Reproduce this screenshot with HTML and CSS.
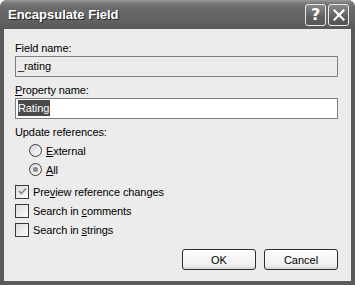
FILE: index.html
```html
<!DOCTYPE html>
<html lang="en">
<head>
    <meta charset="UTF-8">
    <title>Encapsulate Field</title>
    <link rel="stylesheet" href="styles.css">
</head>
<body>
    <div class="window">
        <div class="titlebar">
            <span class="title">Encapsulate Field</span>
            <div class="caption-buttons">
                <div class="cap-btn">?</div>
                <div class="cap-btn">
                    <svg width="12" height="12" viewBox="0 0 12 12">
                        <path d="M1.5 1.5 L10.5 10.5 M10.5 1.5 L1.5 10.5" stroke="#fff" stroke-width="2.2" stroke-linecap="square"/>
                    </svg>
                </div>
            </div>
        </div>

        <div class="client">
            <div class="label">Field name:</div>
            <div class="textbox readonly">_rating</div>

            <div class="label gap"><u>P</u>roperty name:</div>
            <div class="textbox"><span class="selected">Rating</span></div>

            <div class="label gap">Update references:</div>
            <div class="options indent">
                <div class="row">
                    <span class="radio"></span>
                    <span><u>E</u>xternal</span>
                </div>
                <div class="row">
                    <span class="radio checked"><span class="dot"></span></span>
                    <span><u>A</u>ll</span>
                </div>
            </div>

            <div class="options checks">
                <div class="row">
                    <span class="checkbox">
                        <svg width="11" height="11" viewBox="0 0 11 11">
                            <path d="M2 5 L4.3 7.5 L9 2.5" fill="none" stroke="#8a8a8a" stroke-width="1.8"/>
                        </svg>
                    </span>
                    <span>Pre<u>v</u>iew reference changes</span>
                </div>
                <div class="row">
                    <span class="checkbox"></span>
                    <span>Search in <u>c</u>omments</span>
                </div>
                <div class="row">
                    <span class="checkbox"></span>
                    <span>Search in <u>s</u>trings</span>
                </div>
            </div>

            <div class="buttons">
                <button class="btn">OK</button>
                <button class="btn">Cancel</button>
            </div>
        </div>
    </div>
</body>
</html>
```

FILE: styles.css
```css
body {
    margin: 0;
    background-color: #fff;
    font-family: "Liberation Sans", Arial, sans-serif;
    font-size: 11px;
    letter-spacing: -0.1px;
    color: #000;
}

.window {
    width: 355px;
    height: 285px;
    display: flex;
    flex-direction: column;
    border-radius: 7px 7px 0 0;
    overflow: hidden;
    background-color: #5a5a5a;
}

.titlebar {
    height: 29px;
    display: flex;
    align-items: center;
    justify-content: space-between;
    padding: 0 6px 0 8px;
    background: linear-gradient(to bottom, #9a9a9a 0px, #7a7a7a 3px, #6a6a6a 8px, #626262 20px, #585858 29px);
}

.title {
    color: #fff;
    font-family: "Liberation Sans", Arial, sans-serif;
    font-weight: bold;
    font-size: 13px;
    letter-spacing: 0;
    text-shadow: 1px 1px 0 #222;
}

.caption-buttons {
    display: flex;
    gap: 2px;
}

.cap-btn {
    width: 19px;
    height: 20px;
    border: 1px solid #e8e8e8;
    border-radius: 3px;
    background: linear-gradient(to bottom, #8a8a8a, #5e5e5e 60%, #555);
    display: flex;
    align-items: center;
    justify-content: center;
    color: #fff;
    font-family: "DejaVu Sans", sans-serif;
    font-weight: bold;
    font-size: 16px;
}

.client {
    flex: 1;
    margin: 0 4px 4px 4px;
    background-color: #ececec;
    padding: 12px 13px 0 11px;
    display: flex;
    flex-direction: column;
}

.label {
    line-height: 14px;
    margin-bottom: 1px;
}

.label.gap {
    margin-top: 6px;
}

.textbox {
    height: 19px;
    border: 1px solid #7f7f7f;
    background-color: #fff;
    line-height: 19px;
    padding-left: 2px;
}

.textbox.readonly {
    background-color: #ececec;
}

.selected {
    background-color: #4a4a4a;
    color: #fff;
    padding: 2px 1px 2px 0;
}

.options {
    display: flex;
    flex-direction: column;
}

.indent {
    padding-left: 14px;
    margin-top: 1px;
}

.checks {
    margin-top: 3px;
}

.row {
    height: 19px;
    display: flex;
    align-items: center;
    gap: 4px;
}

.radio {
    width: 11px;
    height: 11px;
    border: 1px solid #3a3a3a;
    border-radius: 50%;
    background: linear-gradient(135deg, #d8d8d8, #fafafa);
    display: flex;
    align-items: center;
    justify-content: center;
}

.dot {
    width: 5px;
    height: 5px;
    border-radius: 50%;
    background-color: #8a8a8a;
}

.checkbox {
    width: 12px;
    height: 12px;
    border: 1px solid #3a3a3a;
    background: linear-gradient(135deg, #dcdcdc, #fbfbfb);
    display: flex;
    align-items: center;
    justify-content: center;
}

.buttons {
    margin-top: 10px;
    display: flex;
    justify-content: flex-end;
    gap: 8px;
}

.btn {
    width: 74px;
    height: 21px;
    border: 1px solid #2f2f2f;
    border-radius: 3px;
    background: linear-gradient(to bottom, #fefefe, #f0f0f0 80%, #d6d6d6);
    font-family: "Liberation Sans", Arial, sans-serif;
    font-size: 11px;
    color: #000;
    padding: 0;
}
```
